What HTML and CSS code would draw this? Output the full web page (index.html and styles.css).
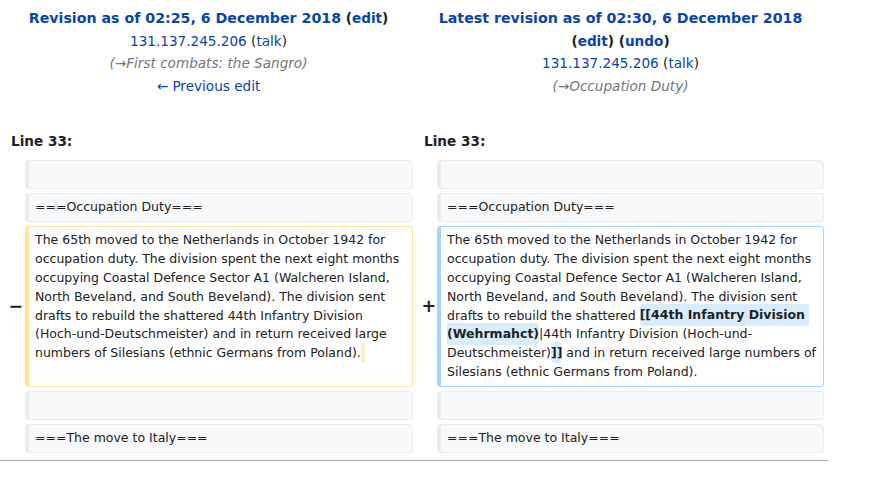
FILE: index.html
```html
<!DOCTYPE html>
<html lang="en">
<head>
<meta charset="utf-8">
<title>Diff</title>
<link rel="stylesheet" href="styles.css">
</head>
<body>
<div class="page">
<table class="diff">
  <colgroup>
    <col class="col-m1">
    <col class="col-c1">
    <col class="col-m2">
    <col class="col-c2">
  </colgroup>
  <tr class="diff-title">
    <td colspan="2" class="diff-otitle">
      <div><strong><a class="rev" href="#">Revision as of 02:25, 6 December 2018</a> <span class="paren">(<a href="#">edit</a>)</span></strong></div>
      <div><a href="#">131.137.245.206</a> <span class="paren">(<a href="#">talk</a>)</span></div>
      <div class="comment">(→First combats: the Sangro)</div>
      <div><a href="#">← Previous edit</a></div>
    </td>
    <td colspan="2" class="diff-ntitle">
      <div><strong><a class="rev" href="#">Latest revision as of 02:30, 6 December 2018</a> <span class="paren">(<a href="#">edit</a>)</span> <span class="paren">(<a href="#">undo</a>)</span></strong></div>
      <div><a href="#">131.137.245.206</a> <span class="paren">(<a href="#">talk</a>)</span></div>
      <div class="comment">(→Occupation Duty)</div>
      <div>&nbsp;</div>
    </td>
  </tr>
  <tr>
    <td colspan="2" class="diff-lineno">Line 33:</td>
    <td colspan="2" class="diff-lineno">Line 33:</td>
  </tr>
  <tr>
    <td class="diff-marker"></td>
    <td class="diff-context"><div>&nbsp;</div></td>
    <td class="diff-marker"></td>
    <td class="diff-context"><div>&nbsp;</div></td>
  </tr>
  <tr>
    <td class="diff-marker"></td>
    <td class="diff-context"><div>===Occupation Duty===</div></td>
    <td class="diff-marker"></td>
    <td class="diff-context"><div>===Occupation Duty===</div></td>
  </tr>
  <tr>
    <td class="diff-marker">−</td>
    <td class="diff-deletedline"><div>The 65th moved to the Netherlands in October 1942 for occupation duty. The division spent the next eight months occupying Coastal Defence Sector A1 (Walcheren Island, North Beveland, and South Beveland). The division sent drafts to rebuild the shattered 44th Infantry Division (Hoch-und-Deutschmeister) and in return received large numbers of Silesians (ethnic Germans from Poland).<del class="diffchange">&nbsp;</del></div></td>
    <td class="diff-marker">+</td>
    <td class="diff-addedline"><div>The 65th moved to the Netherlands in October 1942 for occupation duty. The division spent the next eight months occupying Coastal Defence Sector A1 (Walcheren Island, North Beveland, and South Beveland). The division sent drafts to rebuild the shattered <ins class="diffchange">[[44th Infantry Division (Wehrmahct)</ins>|44th Infantry Division (Hoch-und-Deutschmeister)<ins class="diffchange">]]</ins> and in return received large numbers of Silesians (ethnic Germans from Poland).</div></td>
  </tr>
  <tr>
    <td class="diff-marker"></td>
    <td class="diff-context"><div>&nbsp;</div></td>
    <td class="diff-marker"></td>
    <td class="diff-context"><div>&nbsp;</div></td>
  </tr>
  <tr>
    <td class="diff-marker"></td>
    <td class="diff-context"><div>===The move to Italy===</div></td>
    <td class="diff-marker"></td>
    <td class="diff-context"><div>===The move to Italy===</div></td>
  </tr>
</table>
<div class="rule"></div>
</div>
</body>
</html>
```
FILE: styles.css
```css
html, body {
  margin: 0;
  padding: 0;
  background: #fff;
}
body {
  font-family: "DejaVu Sans", "Noto Sans", sans-serif;
  color: #202122;
}
a {
  color: #0645ad;
  text-decoration: none;
}
.page {
  width: 828px;
}
.diff {
  width: 828px;
  table-layout: fixed;
  border-collapse: separate;
  border-spacing: 4px;
}
.col-m1 { width: 17px; }
.col-c1 { width: 388px; }
.col-m2 { width: 16px; }
.col-c2 { width: 387px; }

.diff-otitle, .diff-ntitle {
  text-align: center;
  vertical-align: top;
  font-size: 13.6px;
  line-height: 22.4px;
  padding: 3.4px 3px 2.6px 3px;
}
.rev {
  font-size: 14.2px;
}
.paren {
  color: #202122;
}
.comment {
  font-style: italic;
  color: #72777d;
}
.diff-lineno {
  font-weight: bold;
  font-size: 13.6px;
  line-height: 22.4px;
  padding: 4px 7px 4px;
}
.diff-marker {
  text-align: left;
  white-space: nowrap;
  font-weight: bold;
  font-size: 17.5px;
  line-height: 1.2;
  padding: 0 0 0 4.5px;
  vertical-align: middle;
}
.diff-context, .diff-deletedline, .diff-addedline {
  font-size: 12.5px;
  line-height: 18.857px;
  vertical-align: top;
  padding: 4px 6px 4px 6px;
  border: 1px solid #eaecf0;
  border-left-width: 4px;
  border-radius: 4px;
  white-space: pre-wrap;
  word-wrap: break-word;
}
.diff-context {
  background: #f8f9fa;
  color: #202122;
}
.diff-deletedline {
  border-color: #ffe49c;
  background: #fff;
}
.diff-addedline {
  border-color: #a3d3ff;
  background: #fff;
}
.diffchange {
  font-weight: bold;
  text-decoration: none;
  border-radius: 4px;
  padding: 0.25em 0;
}
del.diffchange {
  background: #feeec8;
}
ins.diffchange {
  background: #d8ecff;
}
.rule {
  width: 828px;
  border-top: 1px solid #a2a9b1;
  margin-top: 3px;
}
```
